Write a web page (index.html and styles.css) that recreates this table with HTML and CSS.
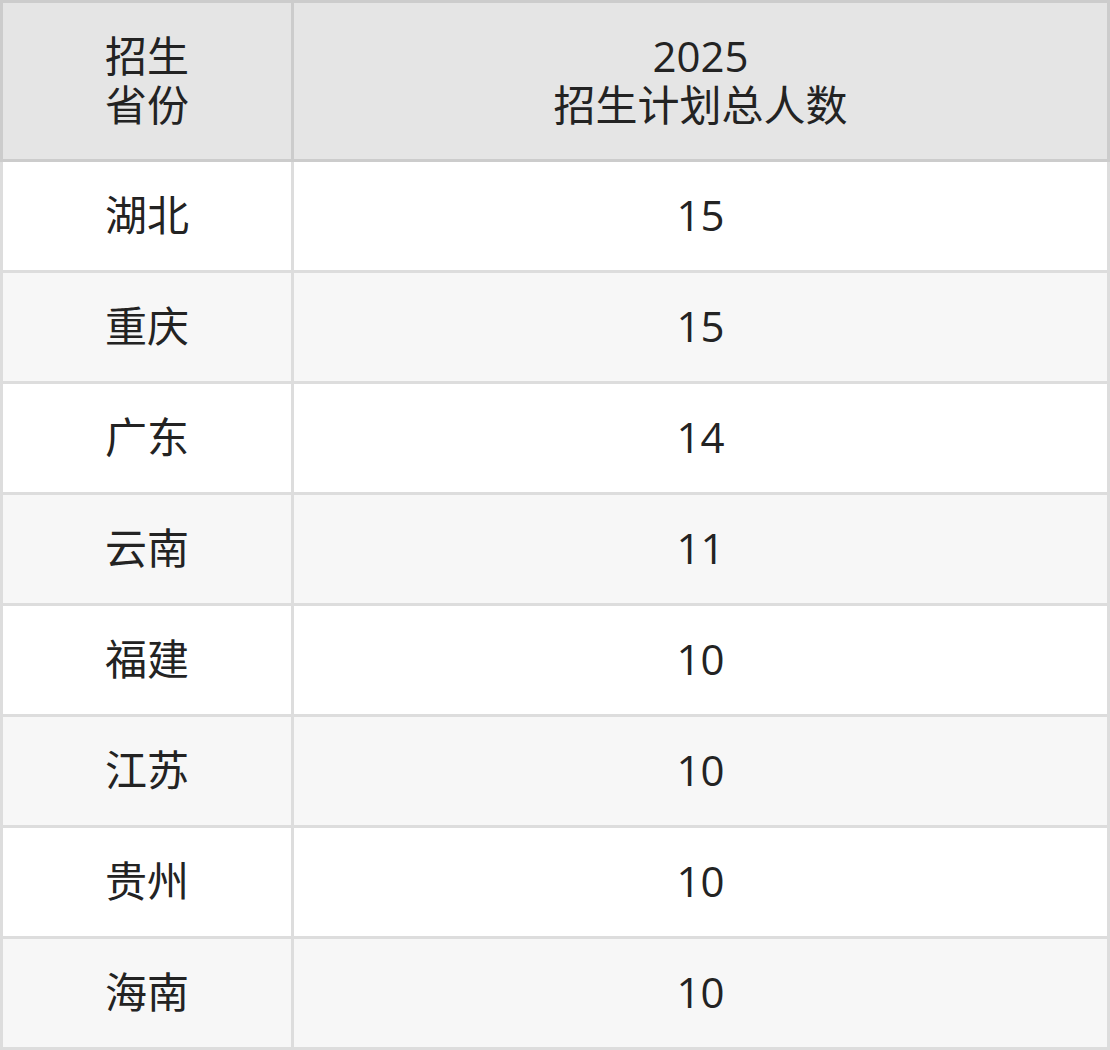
FILE: index.html
```html
<!DOCTYPE html>
<html lang="zh-CN">
<head>
<meta charset="utf-8">
<title>招生计划</title>
<link rel="stylesheet" href="styles.css">
</head>
<body>
<table class="plan">
  <thead>
    <tr>
      <th class="col-prov">招生<br>省份</th>
      <th class="col-num">2025<br>招生计划总人数</th>
    </tr>
  </thead>
  <tbody>
    <tr><td>湖北</td><td>15</td></tr>
    <tr><td>重庆</td><td>15</td></tr>
    <tr><td>广东</td><td>14</td></tr>
    <tr><td>云南</td><td>11</td></tr>
    <tr><td>福建</td><td>10</td></tr>
    <tr><td>江苏</td><td>10</td></tr>
    <tr><td>贵州</td><td>10</td></tr>
    <tr><td>海南</td><td>10</td></tr>
  </tbody>
</table>
</body>
</html>
```
FILE: styles.css
```css
html, body {
  margin: 0;
  padding: 0;
  background: #ffffff;
}

.plan {
  width: 1110px;
  border-collapse: collapse;
  font-family: "Open Sans", "Noto Sans CJK SC", sans-serif;
  font-size: 42px;
  line-height: 49px;
  color: #232323;
  table-layout: fixed;
}

.plan th {
  background: #e5e5e5;
  border: 3px solid #cccccc;
  font-weight: normal;
  text-align: center;
  vertical-align: middle;
  height: 153px;
  padding: 0 0 3px;
}

.plan .col-prov {
  width: 288px;
}

.plan td {
  border: 3px solid #dddddd;
  text-align: center;
  vertical-align: middle;
  height: 105px;
  padding: 0 0 3px;
}

.plan tbody tr:nth-child(even) td {
  background: #f7f7f7;
}
```
